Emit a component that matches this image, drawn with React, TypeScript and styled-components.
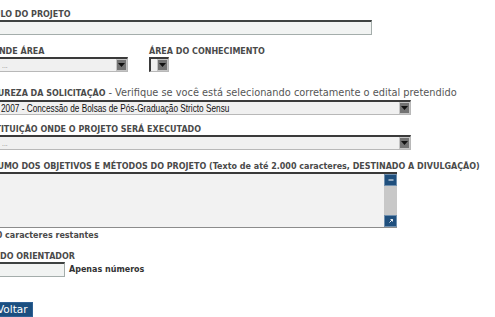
import React from "react";
import styled, { createGlobalStyle } from "styled-components";

const GlobalStyle = createGlobalStyle`
  html, body {
    margin: 0;
    padding: 0;
    background: #ffffff;
    overflow: hidden;
  }
`;

const Page = styled.div`
  margin-left: -20px;
  padding-top: 10px;
  font-family: "DejaVu Sans", Verdana, sans-serif;
  color: #4a4a4a;
`;

const Field = styled.div<{ $mt?: number }>`
  margin-top: ${(p) => p.$mt ?? 0}px;
`;

const Row = styled.div<{ $mt?: number }>`
  display: flex;
  gap: 21px;
  margin-top: ${(p) => p.$mt ?? 0}px;
`;

const Label = styled.div<{ $lh?: number }>`
  font-size: 8px;
  font-weight: bold;
  line-height: ${(p) => p.$lh ?? 10}px;
  color: #4a4a4a;
  white-space: nowrap;
`;

const LabelNote = styled.span`
  font-size: 9.8px;
  font-weight: normal;
  color: #555555;
`;

const TextInput = styled.input<{ $w: number }>`
  display: block;
  box-sizing: border-box;
  width: ${(p) => p.$w}px;
  height: 15px;
  margin: 0;
  padding: 0 2px;
  background: #f1f3f2;
  border-style: solid;
  border-width: 2px 1px 1px 2px;
  border-color: #3e4241 #a4adab #a4adab #3e4241;
  outline: none;
`;

const Select = styled.div<{ $w: number; $h?: number }>`
  display: flex;
  align-items: stretch;
  box-sizing: border-box;
  width: ${(p) => p.$w}px;
  height: ${(p) => p.$h ?? 15}px;
  background: #f0f0f0;
  border-style: solid;
  border-width: 2px 1px 1px 2px;
  border-color: #3a3a3a #b8b8b8 #b8b8b8 #3a3a3a;
`;

const SelectValue = styled.div<{ $muted?: boolean; $pad?: number }>`
  flex: 1;
  min-width: 0;
  padding-left: ${(p) => p.$pad ?? 20}px;
  font-family: "Liberation Sans", Arial, sans-serif;
  font-size: ${(p) => (p.$muted ? 9 : 11)}px;
  line-height: 12px;
  color: ${(p) => (p.$muted ? "#9a9a9a" : "#111111")};
  white-space: nowrap;
  overflow: hidden;
`;

const NarrowText = styled.span`
  display: inline-block;
  transform: scaleX(0.75);
  transform-origin: left center;
`;

const SelectArrow = styled.div`
  box-sizing: border-box;
  width: 11px;
  background: #737373;
  border: 1px solid #c4c4c4;
  display: flex;
  align-items: center;
  justify-content: center;
`;

const TextArea = styled.div`
  display: flex;
  box-sizing: border-box;
  width: 417px;
  height: 56px;
  background: #f2f2f2;
  border-style: solid;
  border-width: 2px 0 1px 2px;
  border-color: #3a3a3a #9a9a9a #8c8c8c #3a3a3a;
`;

const TextAreaBody = styled.div`
  flex: 1;
`;

const ScrollBar = styled.div`
  width: 13px;
  display: flex;
  flex-direction: column;
  background: #c9c9c9;
`;

const ScrollButton = styled.div`
  box-sizing: border-box;
  height: 12px;
  background: #1f4f7d;
  border: 1px solid #6f8fae;
  display: flex;
  align-items: center;
  justify-content: center;
`;

const ScrollTrack = styled.div`
  flex: 1;
  background: #c8c8c8;
`;

const Counter = styled.div<{ $mt?: number }>`
  margin-top: ${(p) => p.$mt ?? 0}px;
  font-size: 8px;
  font-weight: bold;
  line-height: 10px;
  color: #4a4a4a;
  white-space: nowrap;
`;

const InlineRow = styled.div`
  display: flex;
  align-items: center;
  gap: 4px;
`;

const Hint = styled.span`
  font-size: 8px;
  font-weight: bold;
  color: #333333;
  white-space: nowrap;
`;

const Button = styled.button<{ $mt?: number }>`
  display: block;
  margin: ${(p) => p.$mt ?? 0}px 0 0 0;
  box-sizing: border-box;
  width: 53px;
  height: 15px;
  padding: 0 0 0 16px;
  text-align: left;
  background: #1b4f80;
  border: 1px solid #2f6296;
  color: #ffffff;
  font-family: "DejaVu Sans", Verdana, sans-serif;
  font-size: 10.5px;
  line-height: 13px;
`;

const Arrow = () => (
  <svg width="7" height="4" viewBox="0 0 7 4">
    <path d="M0 0 H7 L3.5 4 Z" fill="#111" />
  </svg>
);

const DropDown = ({ w, h, value, muted, pad }: { w: number; h?: number; value?: string; muted?: boolean; pad?: number }) => (
  <Select $w={w} $h={h}>
    <SelectValue $muted={muted} $pad={pad}>
      {value ? <NarrowText>{value}</NarrowText> : null}
    </SelectValue>
    <SelectArrow>
      <Arrow />
    </SelectArrow>
  </Select>
);

export default function App() {
  return (
    <>
      <GlobalStyle />
      <Page>
        <Field>
          <Label>TÍTULO DO PROJETO</Label>
          <TextInput $w={392} />
        </Field>

        <Row $mt={12}>
          <Field>
            <Label>GRANDE ÁREA</Label>
            <DropDown w={148} value="..." muted />
          </Field>
          <Field>
            <Label>ÁREA DO CONHECIMENTO</Label>
            <DropDown w={20} pad={0} />
          </Field>
        </Row>

        <Field $mt={15}>
          <Label $lh={12}>
            NATUREZA DA SOLICITAÇÃO <LabelNote>- Verifique se você está selecionando corretamente o edital pretendido</LabelNote>
          </Label>
          <DropDown w={431} pad={19} value="2007 - Concessão de Bolsas de Pós-Graduação Stricto Sensu" />
        </Field>

        <Field $mt={10}>
          <Label>INSTITUIÇÃO ONDE O PROJETO SERÁ EXECUTADO</Label>
          <DropDown w={431} value="..." muted />
        </Field>

        <Field $mt={12}>
          <Label>RESUMO DOS OBJETIVOS E MÉTODOS DO PROJETO (Texto de até 2.000 caracteres, DESTINADO A DIVULGAÇÃO)</Label>
          <TextArea>
            <TextAreaBody />
            <ScrollBar>
              <ScrollButton>
                <svg width="6" height="6" viewBox="0 0 6 6">
                  <path d="M0.5 3 H5.5" stroke="#fff" strokeWidth="1" />
                </svg>
              </ScrollButton>
              <ScrollTrack />
              <ScrollButton>
                <svg width="6" height="6" viewBox="0 0 6 6">
                  <path d="M1.5 4.5 L4.5 1.5 M4.5 1.5 V3.5 M4.5 1.5 H2.5" stroke="#fff" strokeWidth="0.9" fill="none" />
                </svg>
              </ScrollButton>
            </ScrollBar>
          </TextArea>
        </Field>

        <Counter $mt={3}>2000 caracteres restantes</Counter>

        <Field $mt={11}>
          <Label>CPF DO ORIENTADOR</Label>
          <InlineRow>
            <TextInput $w={85} />
            <Hint>Apenas números</Hint>
          </InlineRow>
        </Field>

        <Button $mt={25}>Voltar</Button>
      </Page>
    </>
  );
}
